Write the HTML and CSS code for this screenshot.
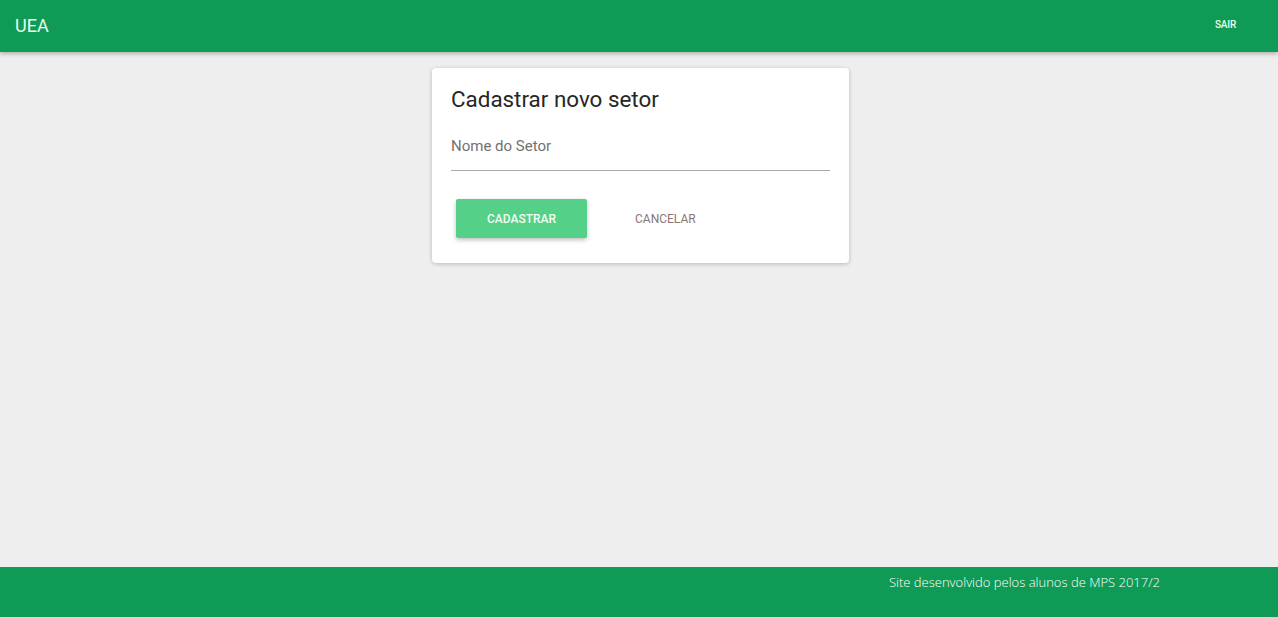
FILE: index.html
```html
<!DOCTYPE html>
<html lang="pt">
<head>
<meta charset="utf-8">
<title>UEA</title>
<link rel="stylesheet" href="styles.css">
</head>
<body>
<div class="page">
  <header class="topbar">
    <span class="brand">UEA</span>
    <a class="logout" href="#">SAIR</a>
  </header>
  <main class="content">
    <section class="card">
      <h1 class="card-title">Cadastrar novo setor</h1>
      <div class="field">
        <label class="field-label">Nome do Setor</label>
      </div>
      <div class="actions">
        <button class="btn btn-primary">CADASTRAR</button>
        <button class="btn btn-flat">CANCELAR</button>
      </div>
    </section>
  </main>
  <footer class="footer">
    <span class="footer-text">Site desenvolvido pelos alunos de MPS 2017/2</span>
  </footer>
</div>
</body>
</html>
```
FILE: styles.css
```css
html, body {
  margin: 0;
  padding: 0;
}
body {
  background: #eeeeee;
  font-family: Roboto, "Liberation Sans", sans-serif;
}
.page {
  min-height: 100vh;
  display: flex;
  flex-direction: column;
}
.topbar {
  height: 52px;
  background: #0f9a55;
  display: flex;
  align-items: center;
  justify-content: space-between;
  padding: 0 42px 0 15px;
  box-shadow: 0 2px 4px rgba(0,0,0,0.25);
  position: relative;
  z-index: 1;
}
.brand {
  color: #e6fff0;
  font-size: 18px;
  font-weight: 400;
  margin-top: -2px;
}
.logout {
  color: #e6fff0;
  font-size: 10px;
  font-weight: 500;
  text-decoration: none;
  margin-top: -3px;
  letter-spacing: -0.2px;
}
.content {
  flex: 1;
  display: flex;
  justify-content: center;
  align-items: flex-start;
  padding-top: 16px;
}
.card {
  width: 379px;
  background: #fff;
  border-radius: 4px;
  box-shadow: 0 1px 4px rgba(0,0,0,0.22);
  padding: 15px 19px 25px 19px;
  margin-left: 3px;
}
.card-title {
  margin: 0;
  font-size: 22.4px;
  font-weight: 400;
  line-height: 32px;
  color: #262626;
}
.field {
  margin-top: 21px;
  height: 34px;
  border-bottom: 1px solid #aaaaaa;
}
.field-label {
  display: block;
  font-size: 15px;
  color: #727272;
  line-height: 20px;
}
.actions {
  display: flex;
  align-items: center;
  margin-top: 28px;
  padding-left: 5px;
}
.btn {
  font-family: Roboto, "Liberation Sans", sans-serif;
  font-size: 12px;
  border: none;
  cursor: pointer;
}
.btn-primary {
  width: 131px;
  height: 39px;
  background: #54d088;
  color: #f0fff5;
  font-weight: 500;
  border-radius: 2px;
  box-shadow: 0 2px 4px rgba(0,0,0,0.25);
}
.btn-flat {
  background: transparent;
  color: #8a7575;
  margin-left: 42px;
  padding: 0 6px;
  height: 39px;
}
.footer {
  height: 50px;
  background: #0f9a55;
  display: flex;
  justify-content: flex-end;
  padding-right: 118px;
}
.footer-text {
  font-family: "Open Sans", "Liberation Sans", sans-serif;
  font-weight: 300;
  font-size: 13px;
  color: #ffffff;
  margin-top: 6px;
}
```
